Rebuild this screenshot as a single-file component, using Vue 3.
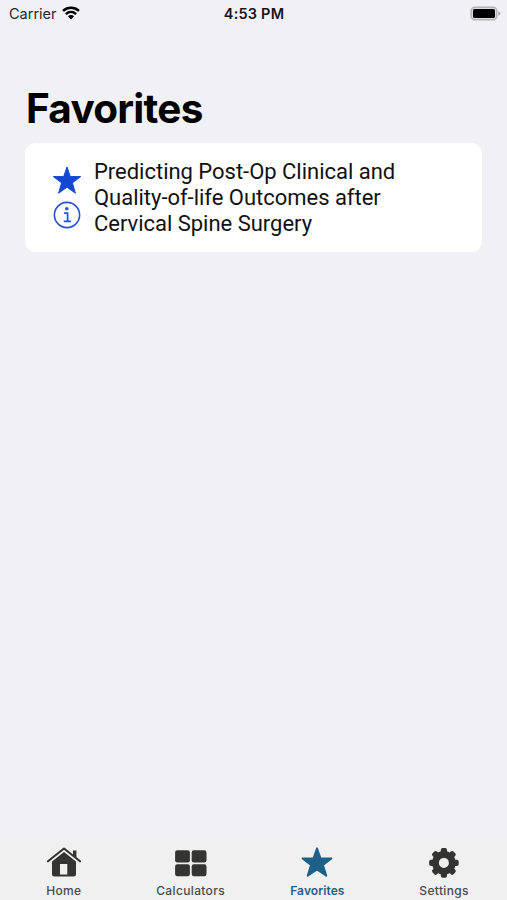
<script setup>
const tabs = [
  { id: 'home', label: 'Home' },
  { id: 'calculators', label: 'Calculators' },
  { id: 'favorites', label: 'Favorites', active: true },
  { id: 'settings', label: 'Settings' },
]
const teeth = [0, 45, 90, 135, 180, 225, 270, 315]
const titleLines = [
  'Predicting Post-Op Clinical and',
  'Quality-of-life Outcomes after',
  'Cervical Spine Surgery',
]
</script>

<template>
  <div class="screen">
    <header class="status">
      <div class="carrier">
        <span class="carrier-name">Carrier</span>
        <svg class="wifi" viewBox="0 0 18 14" width="18" height="14">
          <path d="M1 4.9C5.6.7 12.4.7 17 4.9" fill="none" stroke="#000" stroke-width="2.6" />
          <path d="M3.9 8.1C6.9 5.3 11.1 5.3 14.1 8.1" fill="none" stroke="#000" stroke-width="2.4" />
          <path d="M6 10.3C7.8 8.7 10.2 8.7 12 10.3L9 13.4Z" fill="#000" />
        </svg>
      </div>
      <span class="time">4:53 PM</span>
      <svg class="battery" viewBox="0 0 31 15" width="31" height="15">
        <rect x="1.2" y="1.2" width="25.6" height="12.6" rx="3.8" fill="#dddce0" stroke="#b4b3b7" stroke-width="1.6" />
        <rect x="3" y="3" width="22" height="9" rx="1.6" fill="#000" />
        <path d="M28.3 5.2Q30.5 6 30.5 7.5T28.3 9.8Z" fill="#aaa9ad" />
      </svg>
    </header>

    <main class="content">
      <h1 class="heading">Favorites</h1>
      <article class="card">
        <div class="actions">
          <svg viewBox="0 0 30 29" width="30" height="29">
            <path d="M15 1 18.3 10.6H28.7L20.4 16.9 23.4 27.2 15 21.2 6.6 27.2 9.6 16.9 1.3 10.6H11.7Z" fill="#1248d2" stroke="#1248d2" stroke-width="1" stroke-linejoin="round" />
          </svg>
          <svg viewBox="0 0 28 28" width="28" height="28">
            <circle cx="14" cy="14" r="12.6" fill="none" stroke="#2454d5" stroke-width="1.6" />
            <circle cx="13.8" cy="7.8" r="1.8" fill="#2454d5" />
            <path d="M11.1 12.1H14.6V20.4M10.8 20.4H18" fill="none" stroke="#2454d5" stroke-width="1.7" />
          </svg>
        </div>
        <div class="title">
          <div v-for="line in titleLines" :key="line">{{ line }}</div>
        </div>
      </article>
    </main>

    <nav class="tabs">
      <div v-for="tab in tabs" :key="tab.id" class="tab" :class="[tab.id, { active: tab.active }]">
        <svg class="icon" viewBox="0 0 36 32" width="36" height="32" fill="currentColor">
          <template v-if="tab.id === 'home'">
            <path d="M3 15.3 19 2.5 35 15.3" fill="none" stroke="currentColor" stroke-width="2.1" stroke-linecap="round" stroke-linejoin="round" />
            <path d="M28 4.6H31.4V12L28 9.3Z" />
            <path fill-rule="evenodd" d="M7 15.6 19 6 31 15.6V28Q31 30.5 28.5 30.5H9.5Q7 30.5 7 28ZM15 18V28.5H22.3V18Z" />
          </template>
          <template v-else-if="tab.id === 'calculators'">
            <rect x="3.1" y="4.2" width="14.8" height="12.2" rx="2.2" />
            <rect x="19.7" y="4.2" width="14.8" height="12.2" rx="2.2" />
            <rect x="3.1" y="18.3" width="14.8" height="12" rx="2.2" />
            <rect x="19.7" y="18.3" width="14.8" height="12" rx="2.2" />
          </template>
          <path v-else-if="tab.id === 'favorites'" d="M18 2.3 21.5 12.4H32.4L24 19 27.3 29.8 18 23.4 8.7 29.8 12 19 3.6 12.4H14.5Z" stroke="currentColor" stroke-width="1.9" stroke-linejoin="round" />
          <template v-else>
            <rect v-for="angle in teeth" :key="angle" x="14.8" y="2.1" width="6.2" height="8" rx="1.9" :transform="`rotate(${angle} 17.9 16.9)`" />
            <circle cx="17.9" cy="16.9" r="8.4" fill="none" stroke="currentColor" stroke-width="6.8" />
          </template>
        </svg>
        <span class="label">{{ tab.label }}</span>
      </div>
    </nav>
  </div>
</template>

<style>
body { margin: 0; }
</style>

<style scoped>
.screen {
  width: 507px;
  height: 900px;
  display: flex;
  flex-direction: column;
  background: #f1f0f5;
  color: #000;
  font-family: Inter, sans-serif;
  overflow: hidden;
}
.status {
  height: 26px;
  box-sizing: border-box;
  padding: 0 6px 0 9px;
  display: grid;
  grid-template-columns: 1fr auto 1fr;
  align-items: center;
}
.carrier { display: flex; align-items: center; gap: 5px; }
.carrier-name { font-size: 14.5px; color: #29292b; }
.wifi { margin-top: -1px; }
.time {
  margin-right: 2px;
  font-size: 14.5px;
  font-weight: 600;
  letter-spacing: .2px;
  color: #151517;
}
.battery { justify-self: end; }
.content { flex: 1; padding: 59px 25px 0; }
.heading {
  margin: 0;
  height: 58px;
  padding-left: 1px;
  line-height: 48px;
  font-size: 40.5px;
  font-weight: 700;
  letter-spacing: -.75px;
}
.card {
  height: 109px;
  width: 457px;
  box-sizing: border-box;
  padding: 16px 27px 14px;
  display: flex;
  gap: 12px;
  background: #fff;
  border-radius: 11px;
}
.actions {
  display: flex;
  flex-direction: column;
  align-items: center;
  gap: 6px;
  padding-top: 7px;
}
.title {
  font-family: Roboto, sans-serif;
  font-size: 22px;
  line-height: 26px;
  letter-spacing: -.02px;
  white-space: nowrap;
  color: #111;
}
.tabs {
  height: 59px;
  display: grid;
  grid-template-columns: repeat(4, 1fr);
  background: #f0f0f0;
}
.tab {
  display: flex;
  flex-direction: column;
  align-items: center;
  padding-top: 5px;
  color: #343432;
}
.label {
  margin-top: 5px;
  padding-left: 1px;
  font-size: 12px;
  line-height: 16px;
  font-weight: 500;
  letter-spacing: .35px;
  color: #4b4b4b;
}
.active, .active .label { color: #1f6088; }
.active .label { font-weight: 600; letter-spacing: .1px; }
</style>
